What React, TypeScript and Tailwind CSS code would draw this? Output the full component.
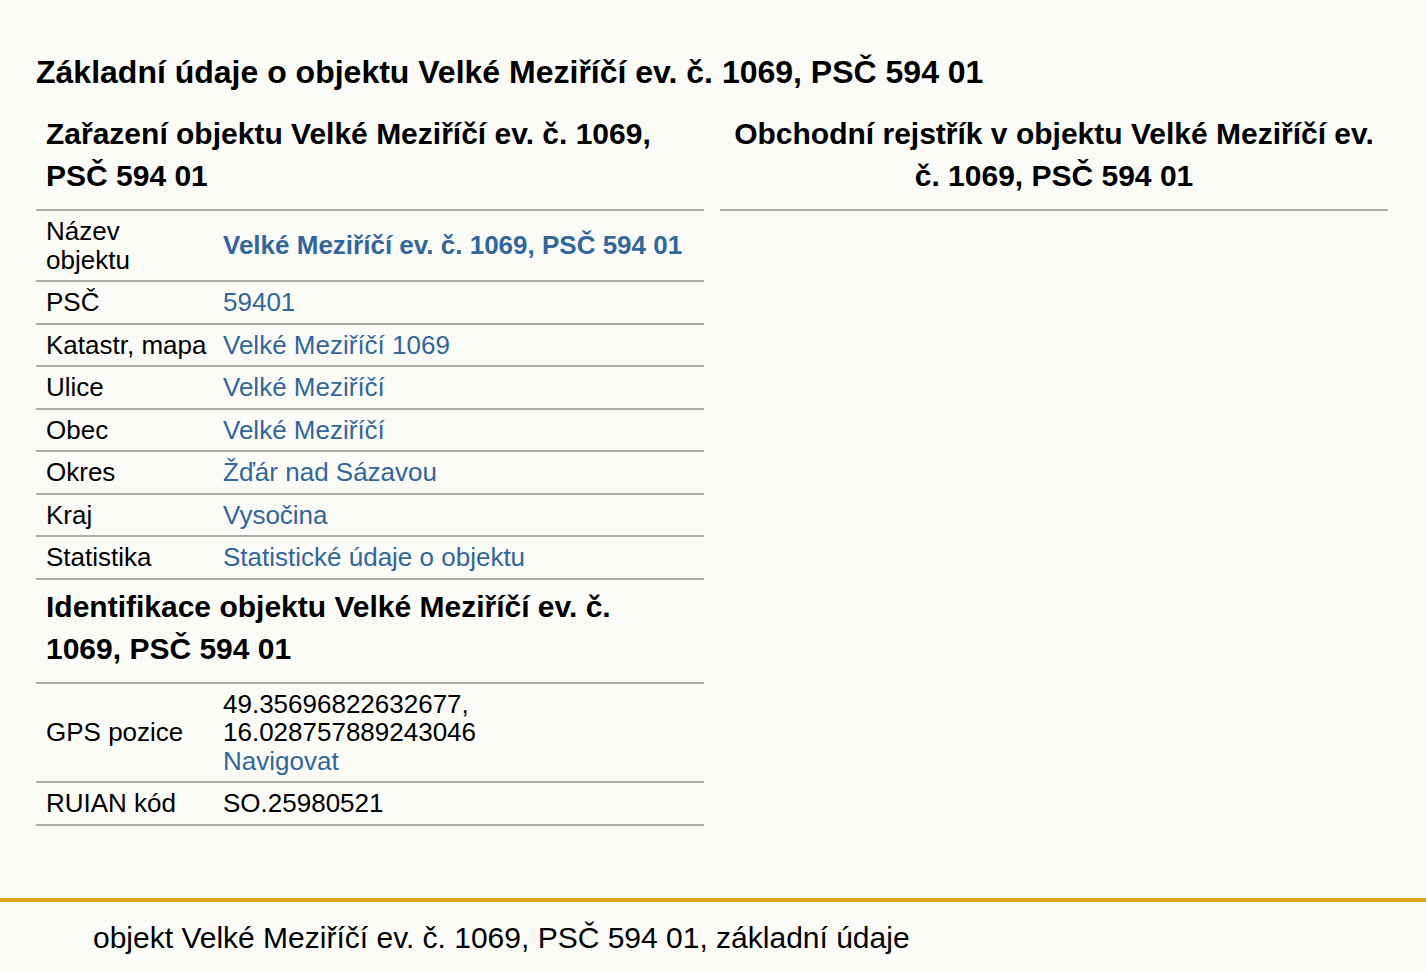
import React from "react";

const rows: { label: React.ReactNode; value: React.ReactNode }[] = [
  {
    label: (
      <>
        Název
        <br />
        objektu
      </>
    ),
    value: <a className="font-bold text-[#336699]">Velké Meziříčí ev. č. 1069, PSČ 594 01</a>,
  },
  { label: "PSČ", value: <a className="text-[#336699]">59401</a> },
  { label: "Katastr, mapa", value: <a className="text-[#336699]">Velké Meziříčí 1069</a> },
  { label: "Ulice", value: <a className="text-[#336699]">Velké Meziříčí</a> },
  { label: "Obec", value: <a className="text-[#336699]">Velké Meziříčí</a> },
  { label: "Okres", value: <a className="text-[#336699]">Žďár nad Sázavou</a> },
  { label: "Kraj", value: <a className="text-[#336699]">Vysočina</a> },
  { label: "Statistika", value: <a className="text-[#336699]">Statistické údaje o objektu</a> },
];

function Row({ label, value }: { label: React.ReactNode; value: React.ReactNode }) {
  return (
    <div className="flex items-center border-b-2 border-[#aaaaaa] py-[6px] leading-[28.5px]">
      <div className="w-[187px] shrink-0 pl-[10px]">{label}</div>
      <div className="flex-1">{value}</div>
    </div>
  );
}

export default function App() {
  return (
    <div
      className="min-h-[972px] bg-[#fafaf7] text-black"
      style={{ fontFamily: '"Liberation Sans", Arial, sans-serif' }}
    >
      <div className="pl-[36px] pr-[38px] pt-[52px]">
        <h1 className="text-[32px] font-bold leading-[40px]">
          Základní údaje o objektu Velké Meziříčí ev. č. 1069, PSČ 594 01
        </h1>

        <div className="mt-[21px] grid grid-cols-2 gap-[16px] text-[26px]">
          {/* Left column */}
          <div>
            <h2 className="border-b-2 border-[#aaaaaa] px-[10px] pb-[12px] text-[30px] font-bold leading-[42px]">
              Zařazení objektu Velké Meziříčí ev. č. 1069, PSČ 594 01
            </h2>
            {rows.map((r, i) => (
              <Row key={i} label={r.label} value={r.value} />
            ))}

            <h2 className="border-b-2 border-[#aaaaaa] px-[10px] pb-[12px] pt-[6px] text-[30px] font-bold leading-[42px]">
              Identifikace objektu Velké Meziříčí ev. č. 1069, PSČ 594 01
            </h2>
            <Row
              label="GPS pozice"
              value={
                <div>
                  49.35696822632677,
                  <br />
                  16.028757889243046
                  <br />
                  <a className="text-[#336699]">Navigovat</a>
                </div>
              }
            />
            <Row label="RUIAN kód" value="SO.25980521" />
          </div>

          {/* Right column */}
          <div>
            <h2 className="border-b-2 border-[#aaaaaa] px-[10px] pb-[12px] text-center text-[30px] font-bold leading-[42px]">
              Obchodní rejstřík v objektu Velké Meziříčí ev. č. 1069, PSČ 594 01
            </h2>
          </div>
        </div>
      </div>

      <footer className="mt-[72px] border-t-4 border-[#daa520] pb-[14px] pl-[93px] pt-[18px] text-[30px] leading-[36px]">
        objekt Velké Meziříčí ev. č. 1069, PSČ 594 01, základní údaje
      </footer>
    </div>
  );
}
